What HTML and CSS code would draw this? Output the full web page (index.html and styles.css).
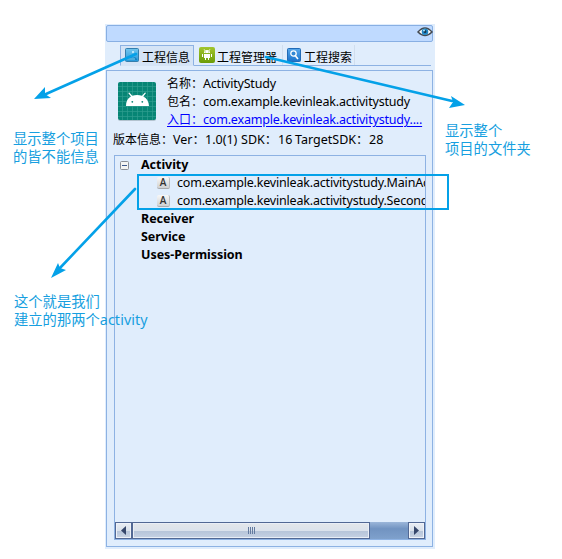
FILE: index.html
```html
<!DOCTYPE html>
<html lang="zh-CN">
<head>
<meta charset="utf-8">
<title>ActivityStudy</title>
<link rel="stylesheet" href="styles.css">
</head>
<body>
<main class="stage">
  <section class="panel">
    <header class="titlebar">
      <svg width="16" height="12" viewBox="0 0 16 12"><path d="M1 6Q8-2 15 6Q8 13 1 6Z" fill="#fff" stroke="#444b52" stroke-width="1.5"/><circle cx="8" cy="5.7" r="3.3" fill="#2186c5"/><circle cx="8" cy="5.7" r="1.4" fill="#173349"/><circle cx="7" cy="4.5" r="1" fill="#a9e4ff"/></svg>
    </header>
    <nav class="tabs">
      <div class="tab active">
        <svg width="14" height="14" viewBox="0 0 14 14"><defs><linearGradient id="sky" x2="0" y2="1"><stop stop-color="#74c6ee"/><stop offset="1" stop-color="#2497da"/></linearGradient></defs><rect x=".5" y=".5" width="13" height="13" rx="1" fill="url(#sky)" stroke="#347ead"/><path d="M2 11L5 9L8 10L10 9L12 11V12H2Z" fill="#1382c3"/><circle cx="8" cy="4" r="1" fill="#d9f5ff"/><path d="M2 11H10" stroke="#85d6f4"/></svg>
        <span>工程信息</span>
      </div>
      <div class="tab manager">
        <svg width="16" height="16" viewBox="0 0 16 16"><defs><linearGradient id="lime" x2="0" y2="1"><stop stop-color="#a2c52d"/><stop offset="1" stop-color="#6c9c08"/></linearGradient></defs><rect width="16" height="16" rx="2" fill="url(#lime)"/><path d="M5 6Q5 3 8 3Q11 3 11 6ZM5 7H11V11H10V13H9V11H7V13H6V11H5ZM3 7H4V10H3ZM12 7H13V10H12Z" fill="#fff"/><path d="M5 2L6 4M11 2L10 4" stroke="#fff" stroke-width=".6"/><path d="M6.5 5H7M9 5H9.5" stroke="#739c13"/></svg>
        <span>工程管理器</span>
      </div>
      <div class="tab search">
        <svg width="14" height="14" viewBox="0 0 14 14"><defs><linearGradient id="blue" x2="0" y2="1"><stop stop-color="#5aa9eb"/><stop offset="1" stop-color="#1871cb"/></linearGradient></defs><rect x=".5" y=".5" width="13" height="13" rx="1" fill="url(#blue)" stroke="#216bb7"/><circle cx="6.5" cy="5.5" r="2.7" fill="#3488d4" stroke="#fff" stroke-width="1.3"/><path d="M8.5 8L11 11" stroke="#fff" stroke-width="1.6"/></svg>
        <span>工程搜索</span>
      </div>
    </nav>
    <div class="content">
      <div class="project">
        <svg class="appicon" width="40" height="42" viewBox="0 0 40 42"><rect x="1" y="2" width="38" height="38" rx="2" fill="#b3c3cf"/><rect x="1" y="1" width="38" height="38" rx="2" fill="#078575"/><path d="M5.5 1V39M10.5 1V39M15.5 1V39M20.5 1V39M25.5 1V39M30.5 1V39M35.5 1V39M1 5.5H39M1 10.5H39M1 15.5H39M1 20.5H39M1 25.5H39M1 30.5H39M1 35.5H39" stroke="#2f9d8f" stroke-width=".7"/><path d="M9 25Q9 18 14 15.5L11.2 12L12.3 11.5L15.3 14.8Q20 13 25 14.8L28 11.5L29 12L26.3 15.5Q31.5 18 32 25Z" fill="#fff"/><circle cx="15.3" cy="20.8" r=".9" fill="#078575"/><circle cx="25.3" cy="20.8" r=".9" fill="#078575"/></svg>
        <div class="details">
          <div>名称：<span>ActivityStudy</span></div>
          <div>包名：<span>com.example.kevinleak.activitystudy</span></div>
          <div class="link">入口：<span>com.example.kevinleak.activitystudy....</span></div>
        </div>
      </div>
      <div class="version"><div>版本信息：</div><span>Ver：</span><span class="v1">1.0(1)</span><span class="v2">SDK：</span><span class="v3">16</span><span class="v4">TargetSDK：</span><span>28</span></div>
      <div class="tree">
        <div class="row group"><svg width="9" height="9" viewBox="0 0 9 9"><rect x=".5" y=".5" width="8" height="8" rx="1" fill="#f4f4f2" stroke="#8b8f96"/><path d="M2 4.5H7" stroke="#3c588c"/></svg><b>Activity</b></div>
        <div class="row child"><i class="badge">A</i><span>com.example.kevinleak.activitystudy.MainActivity</span></div>
        <div class="row child"><i class="badge">A</i><span>com.example.kevinleak.activitystudy.SecondActivity</span></div>
        <div class="row"><b>Receiver</b></div>
        <div class="row"><b>Service</b></div>
        <div class="row"><b>Uses-Permission</b></div>
        <div class="scrollbar">
          <div class="arrow"><svg width="5" height="9" viewBox="0 0 5 9"><path d="M5 0V9L0 4.5Z" fill="#35466b"/></svg></div>
          <div class="thumb"><span class="grip"></span></div>
          <div class="track"></div>
          <div class="arrow"><svg width="5" height="9" viewBox="0 0 5 9"><path d="M0 0V9L5 4.5Z" fill="#35466b"/></svg></div>
        </div>
      </div>
    </div>
  </section>
  <svg class="marks" width="562" height="559" viewBox="0 0 562 559">
    <g fill="none" stroke="#04a1e8" stroke-width="2.6"><path d="M136 54L46 94M266 57L452 101M135 189L59 269" stroke-linecap="round"/><rect x="138" y="175" width="310" height="34" stroke-width="2"/></g>
    <path d="M34 99L45 87L45 94L51 98ZM465 105L451 96L453 102L449 108ZM51 278L58 263L60 268L66 270Z" fill="#04a1e8"/>
  </svg>
  <div class="note note1">显示整个项目<br>的皆不能信息</div>
  <div class="note note2">显示整个<br>项目的文件夹</div>
  <div class="note note3">这个就是我们<br>建立的那两个<span>activity</span></div>
</main>
</body>
</html>
```
FILE: styles.css
```css
* { box-sizing: border-box; }
body { margin: 0; background: #fff; color: #000; font: 12px/18px "Noto Sans", "Noto Sans CJK SC", sans-serif; }
svg { display: block; flex: none; }
.stage { position: relative; width: 562px; height: 559px; overflow: hidden; padding: 24px 0 0 105px; }
.panel { width: 330px; height: 525px; padding: 1px; background: #e0edfc; display: flex; flex-direction: column; }
.titlebar { height: 17px; border: 1px solid #88afe3; border-radius: 2px; background: #bfdaff; display: flex; justify-content: flex-end; margin-right: 1px; }
.titlebar svg { margin-right: -1px; }
.tabs { display: flex; height: 21px; margin: 3px 3px 0 14px; border-bottom: 1px solid #8db2e3; }
.tab { height: 20px; display: flex; align-items: flex-start; white-space: nowrap; padding: 3px 0 0 4px; border-right: 1px solid #d0deee; width: 89px; }
.tab.active { width: 74px; height: 21px; border: 1px solid #8db2e3; border-bottom-color: #d5e4f6; background: #d5e4f6; padding-top: 2px; }
.tab span { margin: 1px 0 0 3px; line-height: 18px; }
.tab.manager { padding-top: 2px; padding-left: 5px; }
.manager span { margin-left: 2px; margin-top: 2px; }
.search { width: 72px; }
.content { flex: 1; margin-top: 4px; border: 1px solid #8db2e3; margin-right: 1px; margin-bottom: 1px; padding: 3px 6px 6px 6px; display: flex; flex-direction: column; }
.project { display: flex; height: 56px; }
.appicon { margin: 7px 0 0 4px; }
.details { margin-left: 10px; padding-top: 1px; white-space: nowrap; }
.details div { height: 18px; }
.details span { font-size: 12.5px; letter-spacing: -.19px; }
.link { color: #00f; text-decoration: underline; text-underline-offset: 2px; }
.version { height: 25px; padding-top: 1px; white-space: nowrap; display: flex; }
.version span { width: 32px; font-size: 12.5px; }
.version .v1 { width: 36px; }
.version .v2 { width: 37px; }
.version .v3 { width: 17px; }
.version .v4 { width: 74px; }
.tree { flex: 1; min-height: 0; border: 1px solid #8db2e3; overflow: hidden; display: flex; flex-direction: column; margin-left: 1px; }
.row { height: 18px; flex: none; padding-left: 26px; display: flex; align-items: center; white-space: nowrap; }
.row b { font-size: 12.5px; letter-spacing: -.05px; }
.group { padding-left: 5px; }
.group b { margin-left: 12px; }
.child { padding-left: 42px; }
.child span { margin: 0 0 0 7px; font-size: 12.5px; letter-spacing: -.19px; }
.badge { flex: none; width: 13px; height: 12px; border-right: 1px solid #bbbdc0; border-bottom: 1px solid #a9abae; border-radius: 2px; background: linear-gradient(#f8f8f7, #d0d1d3); font: 600 10px/11px "Open Sans", sans-serif; text-align: center; color: #333; }
.scrollbar { height: 17px; flex: none; margin-top: auto; display: flex; background: linear-gradient(#9bb6d9, #7193c1 40%, #7fa1cc); }
.arrow { width: 17px; flex: none; border: 1px solid #526894; display: flex; align-items: center; justify-content: center; background: linear-gradient(#e9edf3, #d9e1eb 50%, #b6c5da 55%, #cad4e4); box-shadow: inset 0 0 0 1px #eef2f8; }
.thumb { width: 238px; border: 1px solid #526894; background: linear-gradient(#e4e7ea, #dbe2ec 50%, #b7c5da 55%, #c5d1e3); display: flex; justify-content: center; align-items: center; box-shadow: inset 0 0 0 1px #e9eef6; }
.grip { width: 7px; height: 7px; background: repeating-linear-gradient(90deg, #637a9f 0 1px, transparent 1px 2px); }
.track { flex: 1; }
.marks { position: absolute; left: 0; top: 0; }
.note { position: absolute; color: #179fe0; font-size: 14.3px; line-height: 18px; white-space: nowrap; }
.note1 { left: 13px; top: 130px; }
.note2 { left: 445px; top: 122px; }
.note3 { left: 14px; top: 293px; }
.note3 span { letter-spacing: .1px; }
```
